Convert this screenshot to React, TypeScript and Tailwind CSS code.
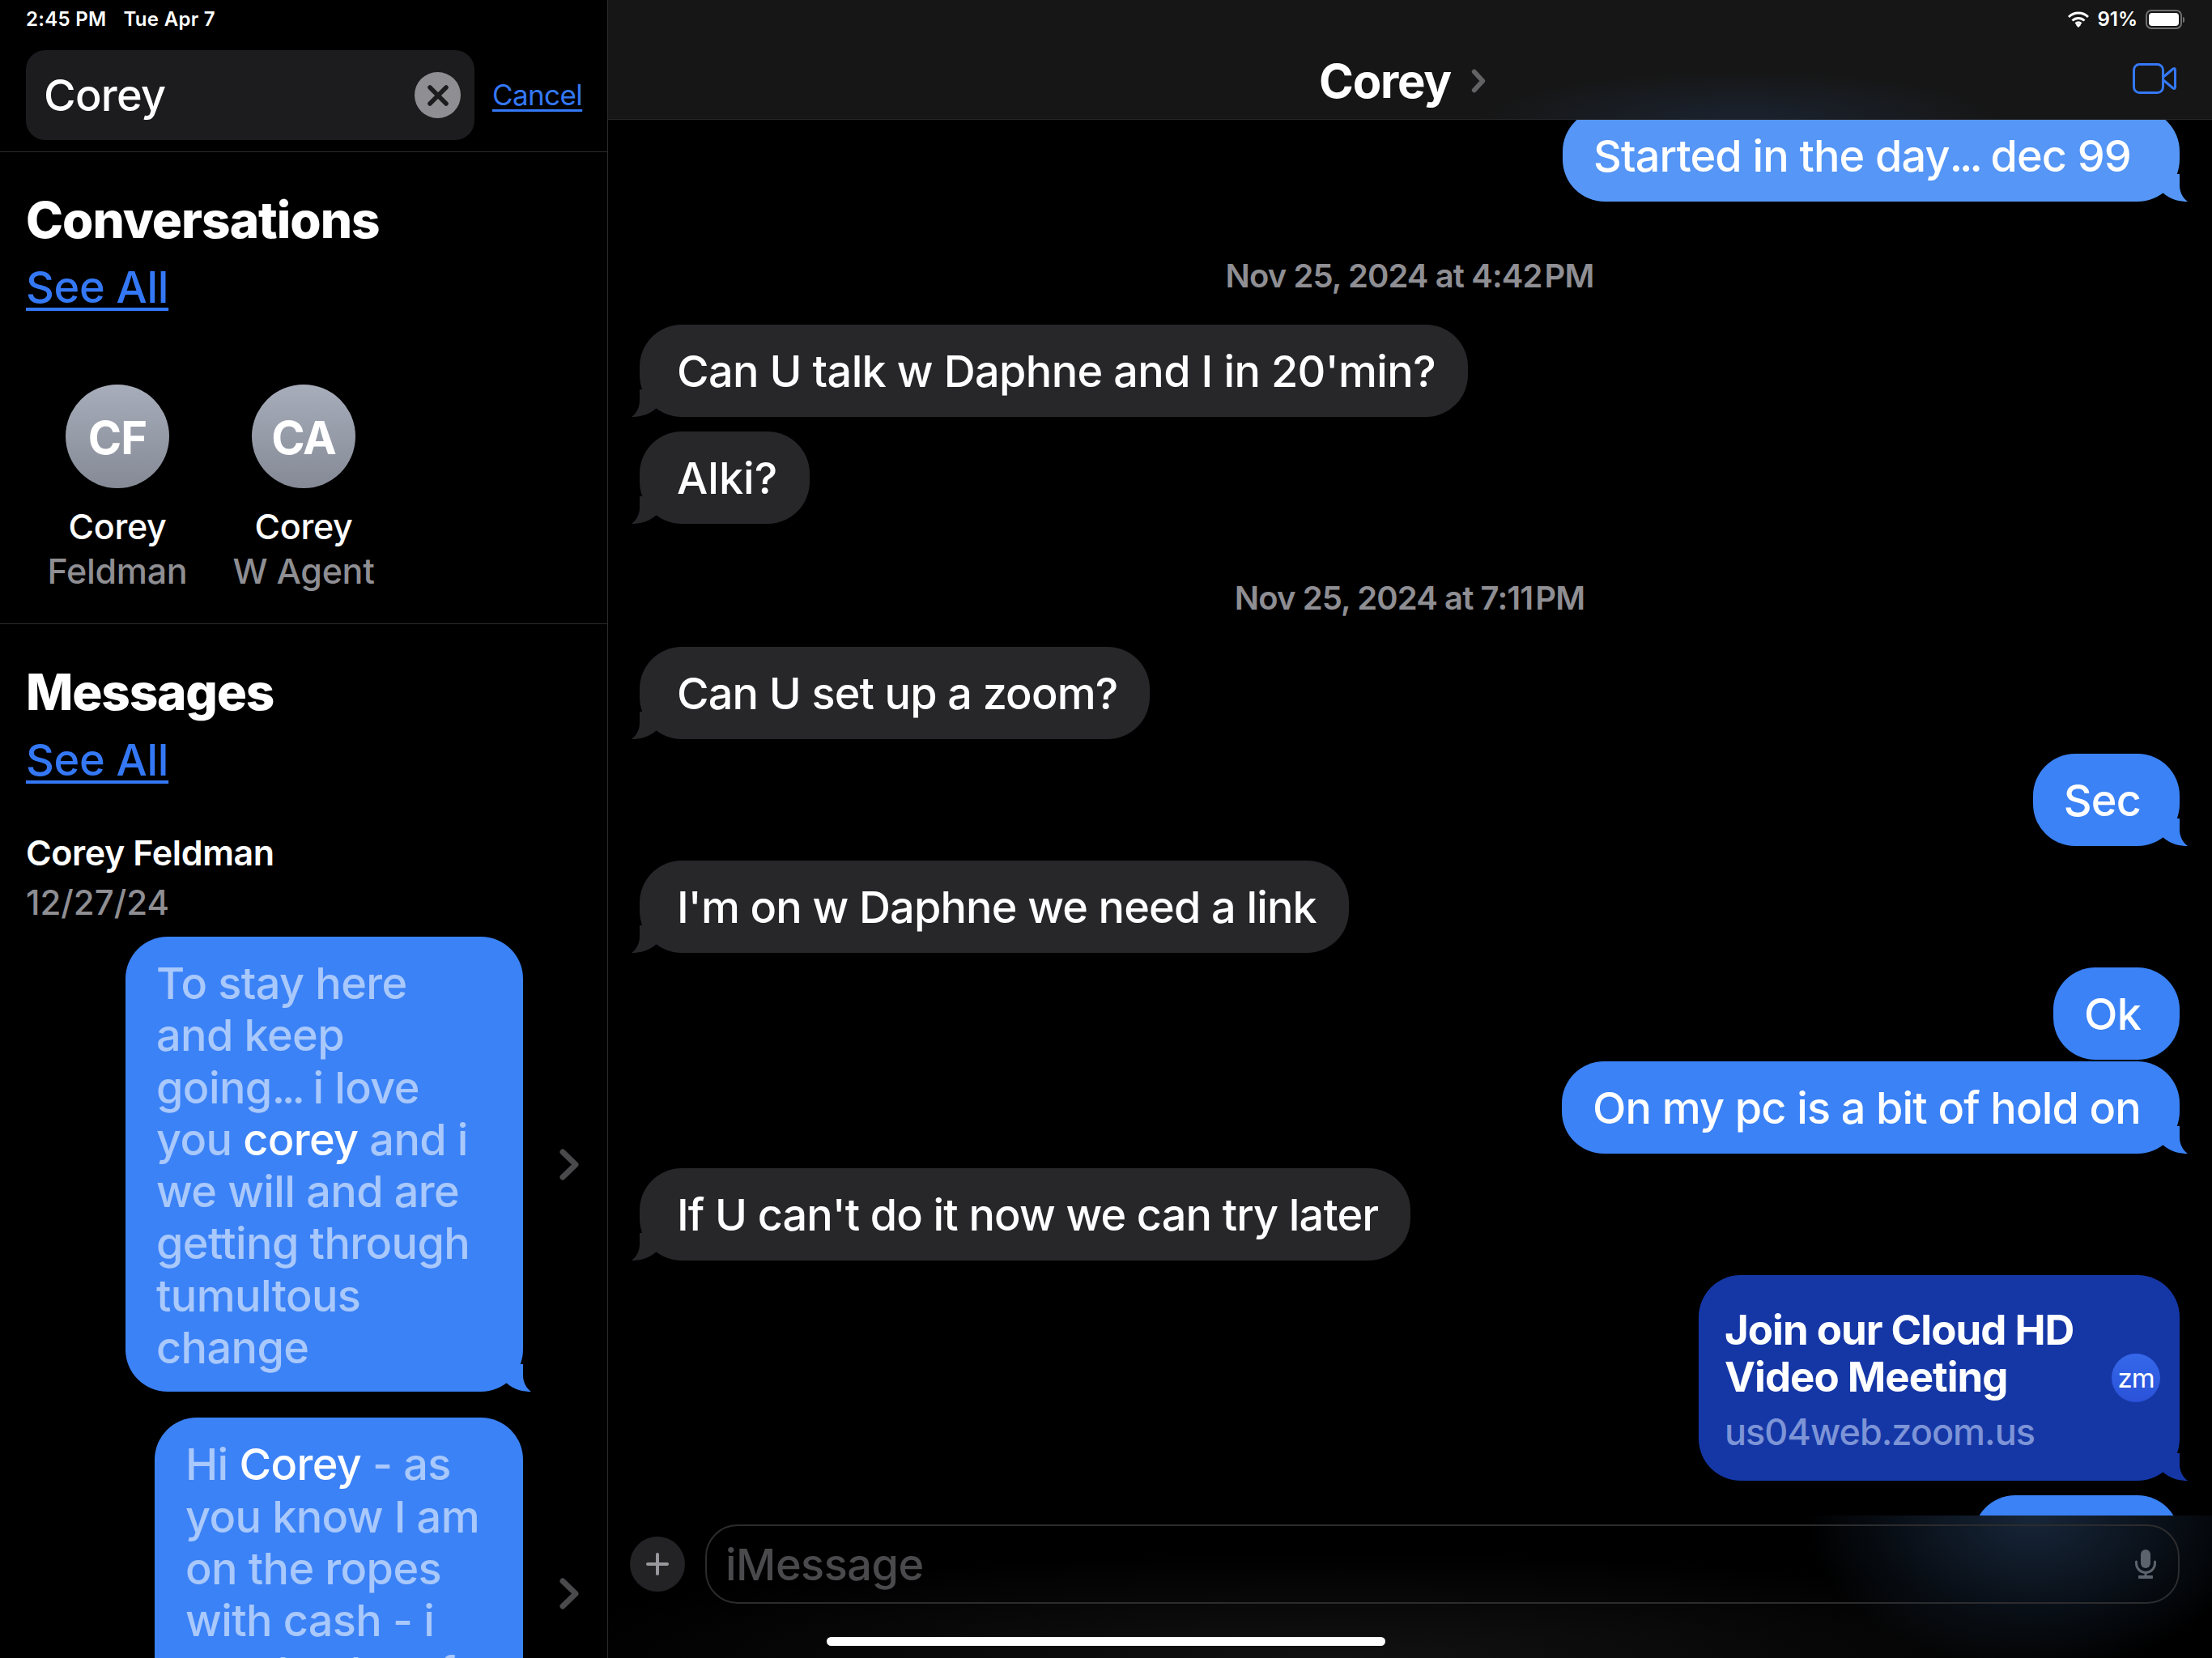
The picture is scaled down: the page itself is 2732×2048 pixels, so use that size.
import { ReactNode } from "react";

const SANS = "font-['Inter','Liberation_Sans',sans-serif]";

function Tail({ color, flip }: { color: string; flip?: boolean }) {
  return (
    <svg
      viewBox="0 0 40 40"
      className={`absolute bottom-0 h-[40px] w-[40px] ${flip ? "right-[-10px] -scale-x-100" : "left-[-10px]"}`}
    >
      <path d="M10 6 L10 20 C10 28 6 36 0 40 C9 40 21 38 31 29 L34 6 Z" fill={color} />
    </svg>
  );
}

function Dots() {
  return <span className="tracking-[-4px]">...</span>;
}

function Incoming({ children, className = "" }: { children: ReactNode; className?: string }) {
  return (
    <div className={`relative flex h-[114px] shrink-0 items-center self-start whitespace-nowrap rounded-[52px] bg-[#27272a] pl-[46px] pr-[40px] text-[54px] font-medium tracking-[-0.85px] text-white ${className}`}>
      {children}
      <Tail color="#27272a" />
    </div>
  );
}

function Outgoing({
  children, className = "", tail = true, color = "#3b82f6", bg = "bg-[#3b82f6]",
}: {
  children: ReactNode; className?: string; tail?: boolean; color?: string; bg?: string;
}) {
  return (
    <div className={`relative flex h-[114px] shrink-0 items-center self-end whitespace-nowrap rounded-[52px] pl-[38px] pr-[48px] text-[54px] font-medium tracking-[-0.85px] text-white ${bg} ${className}`}>
      <span>{children}</span>
      {tail && <Tail color={color} flip />}
    </div>
  );
}

function Stamp({ date, time, className = "" }: { date: string; time: string; className?: string }) {
  return (
    <div className={`h-[52px] shrink-0 text-center text-[40px] font-semibold leading-[52px] tracking-[-0.9px] text-[#8e8e93] ${className}`}>
      {date} at {time}<span className="ml-[3px]">PM</span>
    </div>
  );
}

function Chevron() {
  return (
    <svg viewBox="0 0 25 41" className="h-[41px] w-[25px] shrink-0">
      <path d="M4 5 L20 20.5 L4 36" fill="none" stroke="#4a4a4c" strokeWidth="7" strokeLinecap="round" strokeLinejoin="round" />
    </svg>
  );
}

function Contact({ initials, first, second }: { initials: string; first: string; second: string }) {
  return (
    <div className="flex w-[230px] flex-col items-center">
      <div className="flex h-[128px] w-[128px] items-center justify-center rounded-full bg-gradient-to-b from-[#a8adbb] to-[#858a96] pt-[3px] text-[56px] font-bold tracking-[-1px] text-white">
        {initials}
      </div>
      <div className="mt-[19px] text-[43px] font-medium leading-[56px] tracking-[-0.3px] text-white">{first}</div>
      <div className="text-[43px] font-medium leading-[54px] tracking-[-0.3px] text-[#8e8e93]">{second}</div>
    </div>
  );
}

function Hit({ lines, className }: { lines: ReactNode[]; className: string }) {
  return (
    <div className="flex items-center justify-end gap-[45px] pr-[34px]">
      <div className={`relative rounded-[52px] bg-[#3b82f6] pb-[22px] pl-[38px] pt-[26px] text-[54px] font-medium leading-[64.3px] tracking-[-0.6px] text-[#a9c8fb] ${className}`}>
        {lines.map((l, i) => (
          <div key={i} className="whitespace-nowrap">{l}</div>
        ))}
        <Tail color="#3b82f6" flip />
      </div>
      <Chevron />
    </div>
  );
}

function SeeAll({ className = "" }: { className?: string }) {
  return (
    <a className={`block h-[64px] pl-[32px] text-[54px] font-medium leading-[64px] tracking-[-0.3px] text-[#3478f6] underline decoration-[4px] underline-offset-[6px] ${className}`}>
      See All
    </a>
  );
}

function Sidebar() {
  return (
    <aside className="h-full w-[750px] shrink-0 overflow-hidden bg-black text-white">
      <div className="flex h-[48px] items-center gap-[21px] pl-[32px] text-[24px] font-semibold tracking-[0.3px]">
        <span>2:45 PM</span>
        <span>Tue Apr 7</span>
      </div>

      <div className="mt-[14px] flex items-center pl-[32px]">
        <div className="flex h-[111px] w-[554px] items-center justify-between rounded-[24px] bg-[#1c1c1e] pl-[22px] pr-[17px]">
          <span className="text-[54px] font-medium tracking-[-0.7px]">Corey</span>
          <span className="flex h-[57px] w-[57px] items-center justify-center rounded-full bg-[#8e8e93]">
            <svg viewBox="0 0 24 24" className="h-[30px] w-[30px]">
              <path d="M4 4 L20 20 M20 4 L4 20" stroke="#1c1c1e" strokeWidth="4.4" strokeLinecap="round" />
            </svg>
          </span>
        </div>
        <a className="ml-[22px] text-[35px] tracking-[-0.6px] text-[#3478f6] underline underline-offset-[5px]">Cancel</a>
      </div>

      <div className="mt-[14px] border-t border-[#2c2c2e]" />

      <h2 className="mt-[48px] pl-[32px] text-[62px] font-extrabold leading-[72px] tracking-[-1px]">Conversations</h2>
      <SeeAll className="mt-[15px]" />

      <div className="mt-[88px] flex pl-[30px]">
        <Contact initials="CF" first="Corey" second="Feldman" />
        <Contact initials="CA" first="Corey" second="W Agent" />
      </div>

      <div className="mt-[38px] border-t border-[#2c2c2e]" />

      <h2 className="mt-[48px] pl-[32px] text-[62px] font-extrabold leading-[72px] tracking-[-1.2px]">Messages</h2>
      <SeeAll className="mt-[16px]" />

      <div className="mt-[54px] pl-[32px] text-[43px] font-semibold leading-[56px] tracking-[-0.4px]">Corey Feldman</div>
      <div className="mt-[6px] pl-[32px] text-[42px] font-medium leading-[56px] text-[#8e8e93]">12/27/24</div>

      <div className="mt-[14px] flex flex-col gap-[32px]">
        <Hit
          className="w-[491px]"
          lines={[
            "To stay here",
            "and keep",
            <>going<Dots /> i love</>,
            <>you <span className="text-white">corey</span> and i</>,
            "we will and are",
            "getting through",
            "tumultous",
            "change",
          ]}
        />
        <Hit
          className="h-[434px] w-[455px]"
          lines={[
            <>Hi <span className="text-white">Corey</span> - as</>,
            "you know I am",
            "on the ropes",
            "with cash - i",
            "need to be of",
          ]}
        />
      </div>
    </aside>
  );
}

function Header() {
  return (
    <header className="relative h-[148px] shrink-0 border-b border-[#262628] bg-[#161616] bg-[radial-gradient(ellipse_320px_60px_at_1400px_148px,#1b2330,transparent)]">
      <div className="flex h-[48px] items-center justify-end gap-[10px] pr-[37px] text-[24px] font-semibold text-white">
        <svg viewBox="0 0 26 20" className="h-[20px] w-[26px]">
          <path d="M1 7 A17 17 0 0 1 25 7 M5.5 11.5 A11 11 0 0 1 20.5 11.5 M9.5 15.3 A5.5 5.5 0 0 1 16.5 15.3" fill="none" stroke="white" strokeWidth="3" />
          <path d="M13 20 L9.8 16.8 A5 5 0 0 1 16.2 16.8 Z" fill="white" />
        </svg>
        <span>91%</span>
        <span className="relative flex h-[24px] w-[45px] items-center justify-center rounded-[7px] border-2 border-[#6f6f72] p-[2px]">
          <span className="block h-full w-full rounded-[4px] bg-white" />
          <span className="absolute right-[-5px] top-[7px] h-[7px] w-[2px] rounded-r bg-[#6f6f72]" />
        </span>
      </div>
      <div className="relative flex items-center justify-center pt-[20px]">
        <span className="text-[58px] font-bold leading-[64px] tracking-[-1.2px] text-white">Corey</span>
        <svg viewBox="0 0 20 34" className="ml-[24px] mr-[18px] h-[30px] w-[20px]">
          <path d="M4 4 L16 17 L4 30" fill="none" stroke="#636366" strokeWidth="6.5" strokeLinecap="round" strokeLinejoin="round" />
        </svg>
        <svg viewBox="0 0 54 38" className="absolute right-[44px] top-[30px] h-[38px] w-[54px]">
          <rect x="1.5" y="1.5" width="36" height="35" rx="7" fill="none" stroke="#3478f6" strokeWidth="3" />
          <path d="M38 17 L50 7 Q52.5 5.5 52.5 9 V29 Q52.5 32.5 50 31 L38 21" fill="none" stroke="#3478f6" strokeWidth="3" strokeLinejoin="round" />
        </svg>
      </div>
    </header>
  );
}

function LinkCard() {
  return (
    <div className="relative mt-[18px] flex h-[254px] w-[594px] shrink-0 items-center self-end rounded-[52px] bg-[#1537a6] pl-[32px] pr-[24px] text-white">
      <div className="flex-1 pt-[6px]">
        <div className="whitespace-nowrap text-[51px] font-bold leading-[58px] tracking-[-1px]">Join our Cloud HD<br />Video Meeting</div>
        <div className="mt-[11px] text-[45px] font-medium leading-[56px] tracking-[-1px] text-[#7d94d6]">us04web.zoom.us</div>
      </div>
      <div className="flex h-[60px] w-[60px] shrink-0 items-center justify-center rounded-full bg-gradient-to-b from-[#3568ea] to-[#2a52d8] text-[33px] leading-none tracking-[-1px]">
        zm
      </div>
      <Tail color="#1537a6" flip />
    </div>
  );
}

function Composer() {
  return (
    <footer className="h-[176px] shrink-0 bg-black bg-[radial-gradient(ellipse_280px_190px_at_1760px_0px,#17263a,transparent),radial-gradient(ellipse_1000px_130px_at_900px_176px,#121212,transparent)] pl-[27px] pr-[40px] pt-[11px]">
      <div className="flex items-center gap-[25px]">
        <span className="flex h-[68px] w-[68px] shrink-0 items-center justify-center rounded-full bg-[#232325]">
          <svg viewBox="0 0 28 28" className="h-[28px] w-[28px]">
            <path d="M14 2 V26 M2 14 H26" stroke="#98989d" strokeWidth="4" strokeLinecap="round" />
          </svg>
        </span>
        <div className="flex h-[98px] flex-1 items-center justify-between rounded-[40px] border-2 border-[#2c2c2e] pl-[23px] pr-[27px]">
          <span className="text-[54px] font-medium tracking-[-0.5px] text-[#4a4a4c]">iMessage</span>
          <svg viewBox="0 0 26 36" className="h-[36px] w-[26px]">
            <rect x="7" y="0" width="12" height="23" rx="6" fill="#5c636c" />
            <path d="M1.5 15 V17 A11.5 11.5 0 0 0 24.5 17 V15" fill="none" stroke="#5c636c" strokeWidth="3" strokeLinecap="round" />
            <path d="M13 28 V33" stroke="#5c636c" strokeWidth="3" />
            <rect x="4" y="32" width="18" height="4" rx="1" fill="#5c636c" />
          </svg>
        </div>
      </div>
    </footer>
  );
}

export default function App() {
  return (
    <div className={`relative flex h-[2048px] w-[2732px] overflow-hidden bg-black ${SANS}`}>
      <Sidebar />
      <main className="flex h-full flex-1 flex-col border-l border-[#2c2c2e]">
        <Header />
        <div className="flex min-h-0 flex-1 flex-col overflow-hidden pl-[39px] pr-[40px]">
          <Outgoing className="-mt-[13px] pr-[60px]" color="#5596f6" bg="bg-[#5596f6]">Started in the day<Dots /> dec 99</Outgoing>
          <Stamp className="mt-[66px]" date="Nov 25, 2024" time="4:42" />
          <Incoming className="mt-[34px]"><span className="tracking-[-0.65px]">Can U talk w Daphne and I in 20'min?</span></Incoming>
          <Incoming className="mt-[18px]"><span className="tracking-normal">Alki?</span></Incoming>
          <Stamp className="mt-[66px]" date="Nov 25, 2024" time="7:11" />
          <Incoming className="mt-[34px]">Can U set up a zoom?</Incoming>
          <Outgoing className="mt-[18px]">Sec</Outgoing>
          <Incoming className="mt-[18px]">I'm on w Daphne we need a link</Incoming>
          <Outgoing className="mt-[18px]" tail={false}>Ok</Outgoing>
          <Outgoing className="mt-[2px]">On my pc is a bit of hold on</Outgoing>
          <Incoming className="mt-[18px]">If U can't do it now we can try later</Incoming>
          <LinkCard />
          <Outgoing className="mt-[18px] w-[255px]" tail={false}>{" "}</Outgoing>
        </div>
        <Composer />
      </main>
      <div className="absolute bottom-[15px] left-1/2 h-[11px] w-[690px] -translate-x-1/2 rounded-full bg-white" />
    </div>
  );
}
